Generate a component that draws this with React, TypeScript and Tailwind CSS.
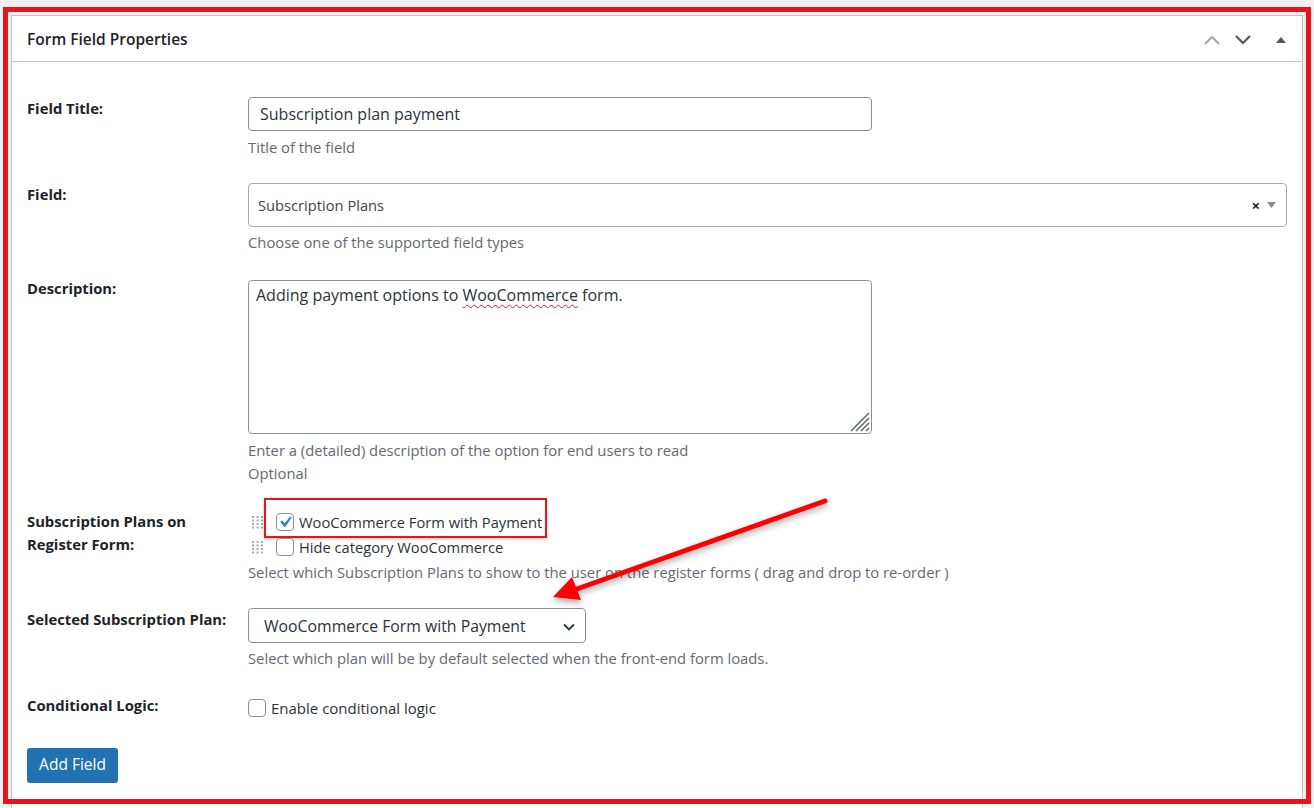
import React from 'react';

function DragHandle() {
  const dots: React.ReactNode[] = [];
  for (let r = 0; r < 4; r++) {
    for (let c = 0; c < 3; c++) {
      dots.push(<rect key={`${r}-${c}`} x={1 + c * 4.5} y={1 + r * 3.5} width="2" height="2" fill="#a7aaad" />);
    }
  }
  return (
    <svg width="14" height="15" viewBox="0 0 14 15" className="shrink-0">
      {dots}
    </svg>
  );
}

function Checkbox({ checked = false }: { checked?: boolean }) {
  return (
    <span className="relative inline-flex h-[18px] w-[18px] shrink-0 items-center justify-center rounded-[4px] border border-[#8c8f94] bg-white">
      {checked && (
        <svg width="22" height="22" viewBox="0 0 20 20" className="-m-[3px]">
          <path d="M14.83 4.89l1.34.94-5.81 8.38H9.02L5.78 9.67l1.34-1.25 2.57 2.4z" fill="#3582c4" />
        </svg>
      )}
    </span>
  );
}

function Label({ children, className = '' }: { children: React.ReactNode; className?: string }) {
  return <div className={`w-[221px] shrink-0 text-[14.8px] font-bold leading-[23px] text-[#1d2327] ${className}`}>{children}</div>;
}

function Desc({ children, className = '' }: { children: React.ReactNode; className?: string }) {
  return <div className={`text-[14.8px] leading-5 text-[#646970] ${className}`}>{children}</div>;
}

export default function App() {
  return (
    <div className="relative h-[808px] overflow-hidden bg-[#f0f0f1] pl-[11px] pt-[15px] font-['Open_Sans',sans-serif]">
      <div className="w-[1292px] border border-[#c3c4c7] bg-white">
        {/* header */}
        <div className="flex h-[46px] items-center justify-between border-b border-[#c3c4c7] pl-[15px] pr-[16px]">
          <h2 className="pt-[3px] text-[15.5px] font-semibold text-[#1d2327]">Form Field Properties</h2>
          <div className="flex items-center pt-[2px]">
            <svg width="18" height="12" viewBox="0 0 18 12" className="mr-[13px]">
              <path d="M2 10l7-7 7 7" fill="none" stroke="#a7aaad" strokeWidth="2.2" />
            </svg>
            <svg width="18" height="12" viewBox="0 0 18 12" className="mr-[24px]">
              <path d="M2 2l7 7 7-7" fill="none" stroke="#50575e" strokeWidth="2.2" />
            </svg>
            <svg width="10" height="8" viewBox="0 0 10 8">
              <path d="M0 7L5 1l5 6z" fill="#50575e" />
            </svg>
          </div>
        </div>

        {/* body */}
        <div className="px-[15px] pb-[40px] pt-[35px]">
          <div className="flex items-start">
            <Label>Field Title:</Label>
            <div>
              <div className="flex h-[34px] w-[624px] items-center rounded-[4px] border border-[#8c8f94] px-[11px] text-[16px] text-[#2c3338]">
                Subscription plan payment
              </div>
              <Desc className="mt-[6px]">Title of the field</Desc>
            </div>
          </div>

          <div className="mt-[26px] flex items-start">
            <Label>Field:</Label>
            <div className="flex-1">
              <div className="flex h-[44px] items-center justify-between rounded-[4px] border border-[#aaaaaa] pl-[9px] pr-[10px] text-[14.7px] text-[#444]">
                <span>Subscription Plans</span>
                <span className="flex items-center gap-[7px]">
                  <span className="text-[15px] font-bold leading-none text-[#1d2327]">×</span>
                  <svg width="9" height="6" viewBox="0 0 9 6">
                    <path d="M0 0h9L4.5 6z" fill="#888" />
                  </svg>
                </span>
              </div>
              <Desc className="mt-[5px]">Choose one of the supported field types</Desc>
            </div>
          </div>

          <div className="mt-[28px] flex items-start">
            <Label className="-mt-[3px]">Description:</Label>
            <div>
              <div className="relative h-[154px] w-[624px] rounded-[4px] border border-[#8c8f94] px-[7px] py-[2px] text-[16px] leading-6 text-[#2c3338]">
                Adding payment options to{' '}
                <span className="underline decoration-[#e02020] decoration-wavy decoration-1 underline-offset-[3px]">WooCommerce</span> form.
                <svg width="22" height="22" viewBox="0 0 22 22" className="absolute bottom-[1px] right-[1px]">
                  <path d="M21 3L3 21M21 8L8 21M21 13L13 21M21 18L18 21" stroke="#646970" strokeWidth="1.6" />
                </svg>
              </div>
              <Desc className="mt-[5px] leading-[23px]">Enter a (detailed) description of the option for end users to read</Desc>
              <Desc className="leading-[23px]">Optional</Desc>
            </div>
          </div>

          <div className="mt-[25px] flex items-start">
            <Label>
              Subscription Plans on
              <br />
              Register Form:
            </Label>
            <div>
              <div className="flex h-[25px] items-center">
                <span className="ml-[3px]"><DragHandle /></span>
                <span className="relative ml-[11px] flex items-center">
                  <Checkbox checked />
                  <span className="ml-[5px] text-[14.7px] text-[#2c3338]">WooCommerce Form with Payment</span>
                  <span className="pointer-events-none absolute -left-[12px] -right-[5px] -top-[13px] -bottom-[4px] border-2 border-[#e8141c] shadow-[0_1px_3px_rgba(0,0,0,0.25)]" />
                </span>
              </div>
              <div className="flex h-[25px] items-center">
                <span className="ml-[3px]"><DragHandle /></span>
                <span className="ml-[11px] flex items-center">
                  <Checkbox />
                  <span className="ml-[5px] text-[14.7px] text-[#2c3338]">Hide category WooCommerce</span>
                </span>
              </div>
              <Desc className="mt-[2px]">
                Select which Subscription Plans to show to the user on the register forms ( drag and drop to re-order )
              </Desc>
            </div>
          </div>

          <div className="mt-[26px] flex items-start">
            <Label>Selected Subscription Plan:</Label>
            <div>
              <div className="flex h-[35px] w-[338px] items-center justify-between rounded-[4px] border border-[#8c8f94] pl-[15px] pr-[9px] pt-[2px] text-[15.8px] text-[#2c3338]">
                <span>WooCommerce Form with Payment</span>
                <svg width="14" height="10" viewBox="0 0 14 10">
                  <path d="M2 2.5l5 5 5-5" fill="none" stroke="#2c3338" strokeWidth="1.8" />
                </svg>
              </div>
              <Desc className="mt-[5px]">Select which plan will be by default selected when the front-end form loads.</Desc>
            </div>
          </div>

          <div className="mt-[26px] flex items-start">
            <Label>Conditional Logic:</Label>
            <div className="flex items-center pt-[3px]">
              <Checkbox />
              <span className="ml-[5px] text-[15px] text-[#2c3338]">Enable conditional logic</span>
            </div>
          </div>

          <button className="mt-[28px] flex h-[35px] w-[91px] items-center justify-center rounded-[3px] bg-[#2271b1] text-[15.5px] text-white">
            Add Field
          </button>
        </div>
      </div>

      {/* annotation frame */}
      <div className="pointer-events-none absolute left-[3px] top-[7px] h-[797px] w-[1308px] border-[5px] border-[#e8141c]" />

      {/* annotation arrow */}
      <svg className="pointer-events-none absolute left-0 top-0" width="1314" height="808">
        <defs>
          <filter id="sh" x="-10%" y="-10%" width="130%" height="140%">
            <feDropShadow dx="0" dy="3" stdDeviation="3" floodColor="#000" floodOpacity="0.35" />
          </filter>
        </defs>
        <g filter="url(#sh)">
          <line x1="825" y1="501" x2="574" y2="590" stroke="#f00" strokeWidth="5" strokeLinecap="round" />
          <path d="M553 597L581 600L572 577z" fill="#f00" />
        </g>
      </svg>
    </div>
  );
}
